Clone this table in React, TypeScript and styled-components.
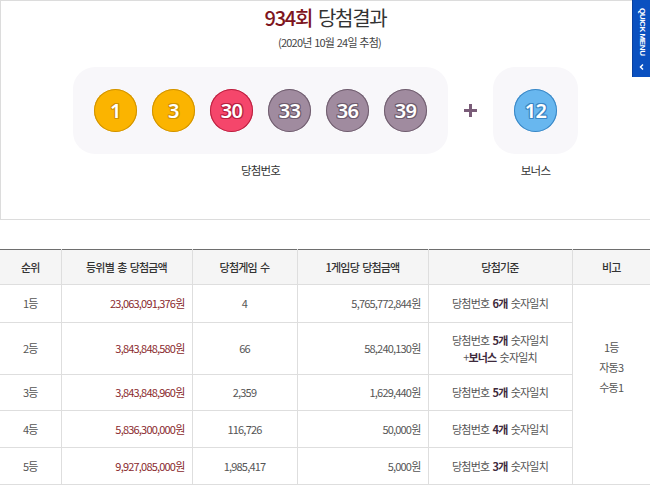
import React from "react";
import styled, { createGlobalStyle } from "styled-components";

const Global = createGlobalStyle`
  html, body { margin: 0; padding: 0; background: #fff; }
  body { font-family: "Noto Sans CJK KR", "Noto Sans", sans-serif; color: #333; }
  * { box-sizing: border-box; }
`;

const Page = styled.div`
  position: relative;
  width: 650px;
  height: 487px;
  overflow: hidden;
`;

const ResultBox = styled.section`
  height: 220px;
  border: 1px solid #dcdcdc;
  border-right: none;
  display: flex;
  flex-direction: column;
  align-items: center;
`;

const Title = styled.h2`
  margin: 3px 0 0;
  font-size: 20px;
  line-height: 28px;
  font-weight: 400;
  letter-spacing: -1.3px;
  color: #333;
  white-space: nowrap;
`;

const Round = styled.strong`
  color: #7e1520;
  font-weight: 500;
  margin-right: 6px;
`;

const DrawDate = styled.p`
  margin: 1px 0 0 8px;
  font-size: 11px;
  line-height: 18px;
  letter-spacing: -0.8px;
  word-spacing: 1px;
  color: #444;
`;

const BallsRow = styled.div`
  margin-top: 16px;
  display: flex;
  align-items: flex-start;
`;

const Group = styled.div`
  display: flex;
  flex-direction: column;
  align-items: center;
`;

const Panel = styled.div`
  height: 87px;
  padding: 0 21px;
  border-radius: 22px;
  background: #f8f7fa;
  display: flex;
  align-items: center;
  gap: 15px;
`;

const GroupLabel = styled.span`
  margin-top: 8px;
  font-size: 11.5px;
  line-height: 16px;
  letter-spacing: -0.8px;
  color: #333;
`;

const Ball = styled.span<{ $bg: string; $edge: string }>`
  width: 43px;
  height: 43px;
  border-radius: 50%;
  background: ${(p) => p.$bg};
  box-shadow: inset 0 0 0 1px ${(p) => p.$edge};
  display: flex;
  align-items: center;
  justify-content: center;
  font-family: "Noto Sans", "Open Sans", sans-serif;
  font-size: 20px;
  font-weight: 600;
  letter-spacing: -0.6px;
  color: #fff;
  text-shadow: 1px 0 0 ${(p) => p.$edge}, -1px 0 0 ${(p) => p.$edge},
    0 1px 0 ${(p) => p.$edge}, 0 -1px 0 ${(p) => p.$edge},
    1px 1px 0 ${(p) => p.$edge}, -1px -1px 0 ${(p) => p.$edge},
    1px -1px 0 ${(p) => p.$edge}, -1px 1px 0 ${(p) => p.$edge};
`;

const PlusWrap = styled.div`
  width: 45px;
  height: 87px;
  display: flex;
  align-items: center;
  justify-content: center;
`;

const QuickMenu = styled.div`
  position: absolute;
  top: 0;
  right: 0;
  width: 18px;
  height: 77px;
  background: #0a50c0;
  border-left: 1px solid #0840a0;
  color: #fff;
  display: flex;
  flex-direction: column;
  align-items: center;
  padding-top: 8px;
`;

const QuickText = styled.span`
  writing-mode: vertical-rl;
  font-family: "Liberation Sans", Arial, sans-serif;
  font-size: 8px;
  font-weight: 700;
  letter-spacing: -0.4px;
  line-height: 1;
`;

const TableWrap = styled.div`
  margin-top: 29px;
`;

const Table = styled.table`
  width: 650px;
  border-collapse: collapse;
  table-layout: fixed;
  border-top: 1px solid #6e6e6e;
  font-size: 11px;
  letter-spacing: -0.8px;
  word-spacing: 1.5px;
  color: #555;
`;

const Th = styled.th`
  height: 35px;
  background: #f5f5f5;
  font-weight: 500;
  color: #333;
  border: 1px solid #dedede;
  border-top: none;
  padding: 0;
  &:first-child { border-left: none; }
  &:last-child { border-right: none; }
`;

const Td = styled.td<{ $align?: "left" | "right" | "center"; $red?: boolean }>`
  text-align: ${(p) => p.$align || "center"};
  padding: 0 ${(p) => (p.$align === "right" ? "7px" : "0")} 0 0;
  color: ${(p) => (p.$red ? "#8a2a2e" : "#555")};
  border: 1px solid #dedede;
  line-height: 17px;
  &:first-child { border-left: none; }
`;

const NoteTd = styled.td`
  border: 1px solid #dedede;
  border-right: none;
  text-align: center;
  vertical-align: middle;
  padding-bottom: 36px;
  line-height: 20px;
  color: #555;
`;

const Row = styled.tr<{ $h: number }>`
  height: ${(p) => p.$h}px;
`;

const Em = styled.b`
  color: #3e2a3c;
  font-weight: 700;
`;

const balls = [
  { n: 1, bg: "#fbb400", edge: "#cf9200" },
  { n: 3, bg: "#fbb400", edge: "#cf9200" },
  { n: 30, bg: "#f5466b", edge: "#b8203f" },
  { n: 33, bg: "#a08b9f", edge: "#6f5d6e" },
  { n: 36, bg: "#a08b9f", edge: "#6f5d6e" },
  { n: 39, bg: "#a08b9f", edge: "#6f5d6e" },
];

const rows = [
  { rank: "1등", total: "23,063,091,376원", cnt: "4", per: "5,765,772,844원", n: "6", h: 38 },
  { rank: "2등", total: "3,843,848,580원", cnt: "66", per: "58,240,130원", n: "5", bonus: true, h: 52 },
  { rank: "3등", total: "3,843,848,960원", cnt: "2,359", per: "1,629,440원", n: "5", h: 36 },
  { rank: "4등", total: "5,836,300,000원", cnt: "116,726", per: "50,000원", n: "4", h: 37 },
  { rank: "5등", total: "9,927,085,000원", cnt: "1,985,417", per: "5,000원", n: "3", h: 37 },
];

export default function App() {
  return (
    <Page>
      <Global />
      <ResultBox>
        <Title>
          <Round>934회</Round>당첨결과
        </Title>
        <DrawDate>(2020년 10월 24일 추첨)</DrawDate>
        <BallsRow>
          <Group>
            <Panel>
              {balls.map((b) => (
                <Ball key={b.n} $bg={b.bg} $edge={b.edge}>
                  {b.n}
                </Ball>
              ))}
            </Panel>
            <GroupLabel>당첨번호</GroupLabel>
          </Group>
          <PlusWrap>
            <svg width="15" height="15" viewBox="0 0 15 15">
              <path d="M7.5 1v13M1 7.5h13" stroke="#7a5c78" strokeWidth="3" />
            </svg>
          </PlusWrap>
          <Group>
            <Panel>
              <Ball $bg="#68b7ef" $edge="#3a86c4">12</Ball>
            </Panel>
            <GroupLabel>보너스</GroupLabel>
          </Group>
        </BallsRow>
      </ResultBox>
      <QuickMenu>
        <QuickText>QUICK MENU</QuickText>
        <svg width="8" height="8" viewBox="0 0 8 8" style={{ marginTop: 7 }}>
          <path d="M5 1.5 2.5 4 5 6.5" stroke="#fff" strokeWidth="1.5" fill="none" />
        </svg>
      </QuickMenu>
      <TableWrap>
        <Table>
          <colgroup>
            <col style={{ width: 61 }} />
            <col style={{ width: 131 }} />
            <col style={{ width: 105 }} />
            <col style={{ width: 131 }} />
            <col style={{ width: 144 }} />
            <col style={{ width: 78 }} />
          </colgroup>
          <thead>
            <tr>
              <Th>순위</Th>
              <Th>등위별 총 당첨금액</Th>
              <Th>당첨게임 수</Th>
              <Th>1게임당 당첨금액</Th>
              <Th>당첨기준</Th>
              <Th>비고</Th>
            </tr>
          </thead>
          <tbody>
            {rows.map((r, i) => (
              <Row key={r.rank} $h={r.h}>
                <Td>{r.rank}</Td>
                <Td $align="right" $red>
                  {r.total}
                </Td>
                <Td>{r.cnt}</Td>
                <Td $align="right">{r.per}</Td>
                <Td>
                  당첨번호 <Em>{r.n}개</Em> 숫자일치
                  {r.bonus && (
                    <>
                      <br />+<Em>보너스</Em> 숫자일치
                    </>
                  )}
                </Td>
                {i === 0 && (
                  <NoteTd rowSpan={5}>
                    1등
                    <br />
                    자동3
                    <br />
                    수동1
                  </NoteTd>
                )}
              </Row>
            ))}
          </tbody>
        </Table>
      </TableWrap>
    </Page>
  );
}
